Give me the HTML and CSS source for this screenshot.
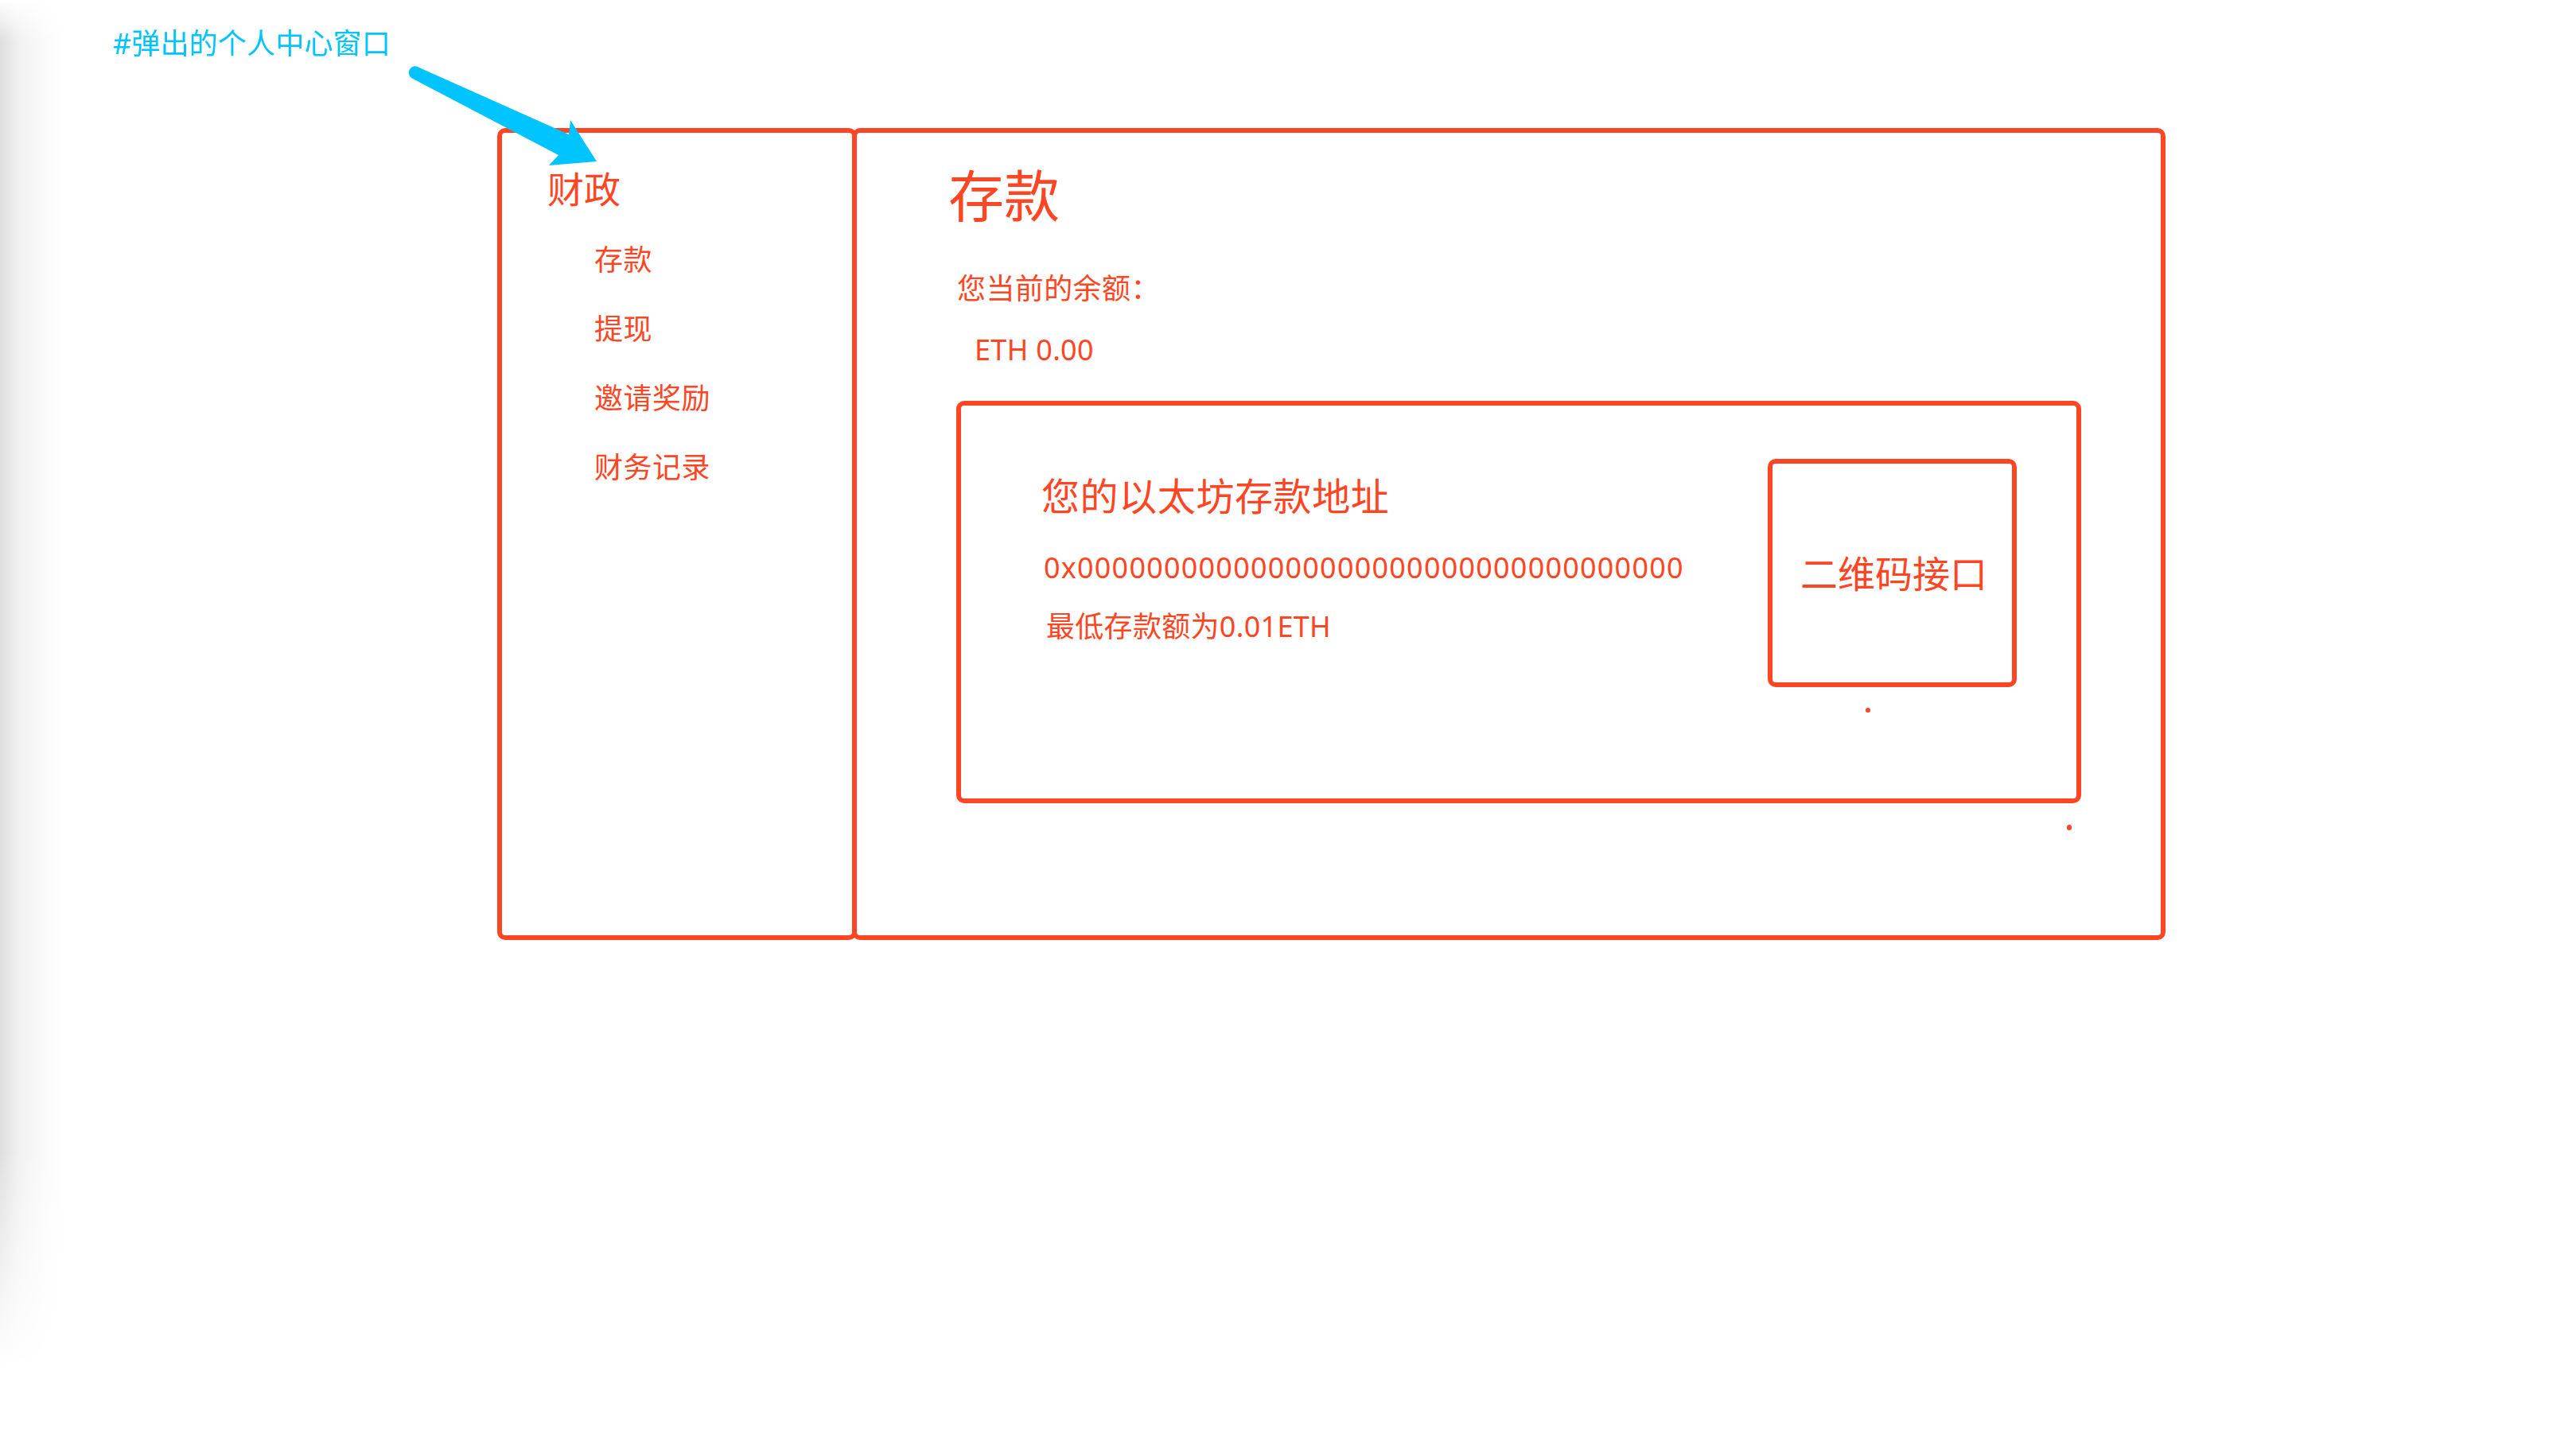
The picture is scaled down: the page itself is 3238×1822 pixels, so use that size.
FILE: index.html
```html
<!DOCTYPE html>
<html lang="zh-CN">
<head>
<meta charset="UTF-8">
<title>个人中心 - 存款</title>
<link rel="stylesheet" href="styles.css">
</head>
<body>
<div class="edge"></div>

<p class="note">#弹出的个人中心窗口</p>
<svg class="arrow" width="760" height="220" viewBox="0 0 760 220">
  <path d="M527 85 L715 169 L717 151 L750 203 L690 208 L702 195 L517 98 A6.5 6.5 0 0 1 527 85 Z"/>
</svg>

<div class="window">
  <div class="sidebar">
    <h2 class="side-title">财政</h2>
    <ul class="nav">
      <li>存款</li>
      <li>提现</li>
      <li>邀请奖励</li>
      <li>财务记录</li>
    </ul>
  </div>

  <div class="main">
    <h1 class="main-title">存款</h1>
    <p class="balance-label">您当前的余额：</p>
    <p class="balance">ETH 0.00</p>

    <div class="deposit">
      <div class="deposit-info">
        <h3 class="deposit-title">您的以太坊存款地址</h3>
        <p class="address">0x00000000000000000000000000000000000</p>
        <p class="min">最低存款额为0.01ETH</p>
      </div>
      <div class="qr-col">
        <div class="qr">二维码接口</div>
        <span class="dot dot-qr"></span>
      </div>
    </div>
    <span class="dot dot-main"></span>
  </div>
</div>
</body>
</html>
```

FILE: styles.css
```css
/* sketch of the pop-up personal center window */
body {
    margin: 0;
    background: #fff;
    color: #ff4624;
    font-family: "Noto Sans", "Noto Sans CJK SC", sans-serif;
    font-size: 36px;
    line-height: 50px;
}
h1, h2, h3, p, ul {
    margin: 0;
    padding: 0;
    font-weight: normal;
}
ul {
    list-style: none;
}

/* grey fold on the left edge of the canvas */
.edge {
    position: fixed;
    left: 0;
    top: 0;
    width: 80px;
    height: 1720px;
    background: linear-gradient(to right, #dedede, #f1f1f1 30%, #fbfbfb 70%, #fff);
    -webkit-mask-image: linear-gradient(to bottom, transparent, #000 3%, #000 84%, transparent);
    mask-image: linear-gradient(to bottom, transparent, #000 3%, #000 84%, transparent);
}

/* annotation */
.note {
    position: relative;
    height: 161px;
    box-sizing: border-box;
    padding: 30px 0 0 142px;
    color: #00c4ff;
    font-size: 36px;
    letter-spacing: 0.2px;
}
.arrow {
    position: absolute;
    left: 0;
    top: 0;
    fill: #00c4ff;
    z-index: 2;
}

/* window */
.window {
    display: flex;
    margin-left: 625px;
    width: 2097px;
    height: 1021px;
}
.sidebar,
.main,
.deposit,
.qr {
    box-sizing: border-box;
    border: 6px solid #ff4624;
    border-radius: 10px;
}
.sidebar {
    width: 452px;
    padding: 40px 0 0 57px;
}
.side-title {
    font-size: 46px;
    line-height: 60px;
}
.nav {
    display: flex;
    flex-direction: column;
    gap: 37px;
    margin: 35px 0 0 59px;
    letter-spacing: 0.5px;
}

.main {
    flex: 1;
    margin-left: -6px;
    padding: 39px 0 0 115px;
}
.main-title {
    font-size: 70px;
    line-height: 80px;
}
.balance-label {
    margin: 52px 0 0 11px;
    letter-spacing: 0.4px;
}
.balance {
    margin: 27px 0 0 33px;
    letter-spacing: 0.3px;
}

.deposit {
    display: flex;
    width: 1414px;
    height: 506px;
    margin: 39px 0 0 10px;
}
.deposit-info {
    padding: 82px 0 0 101px;
}
.deposit-title {
    font-size: 48px;
    line-height: 64px;
    letter-spacing: 0.6px;
}
.address {
    margin: 33px 0 0 3px;
    letter-spacing: 1.2px;
}
.min {
    margin: 24px 0 0 6px;
    letter-spacing: 0.3px;
}

.qr-col {
    margin: 67px 75px 0 auto;
}
.qr {
    display: flex;
    align-items: center;
    justify-content: center;
    width: 313px;
    height: 287px;
    font-size: 47px;
    padding-left: 4px;
}

.dot {
    display: block;
    width: 6px;
    height: 6px;
    border-radius: 50%;
    background: #ff4624;
}
.dot-qr {
    margin: 26px 0 0 123px;
}
.dot-main {
    height: 7px;
    margin: 27px 0 0 1406px;
}
```
